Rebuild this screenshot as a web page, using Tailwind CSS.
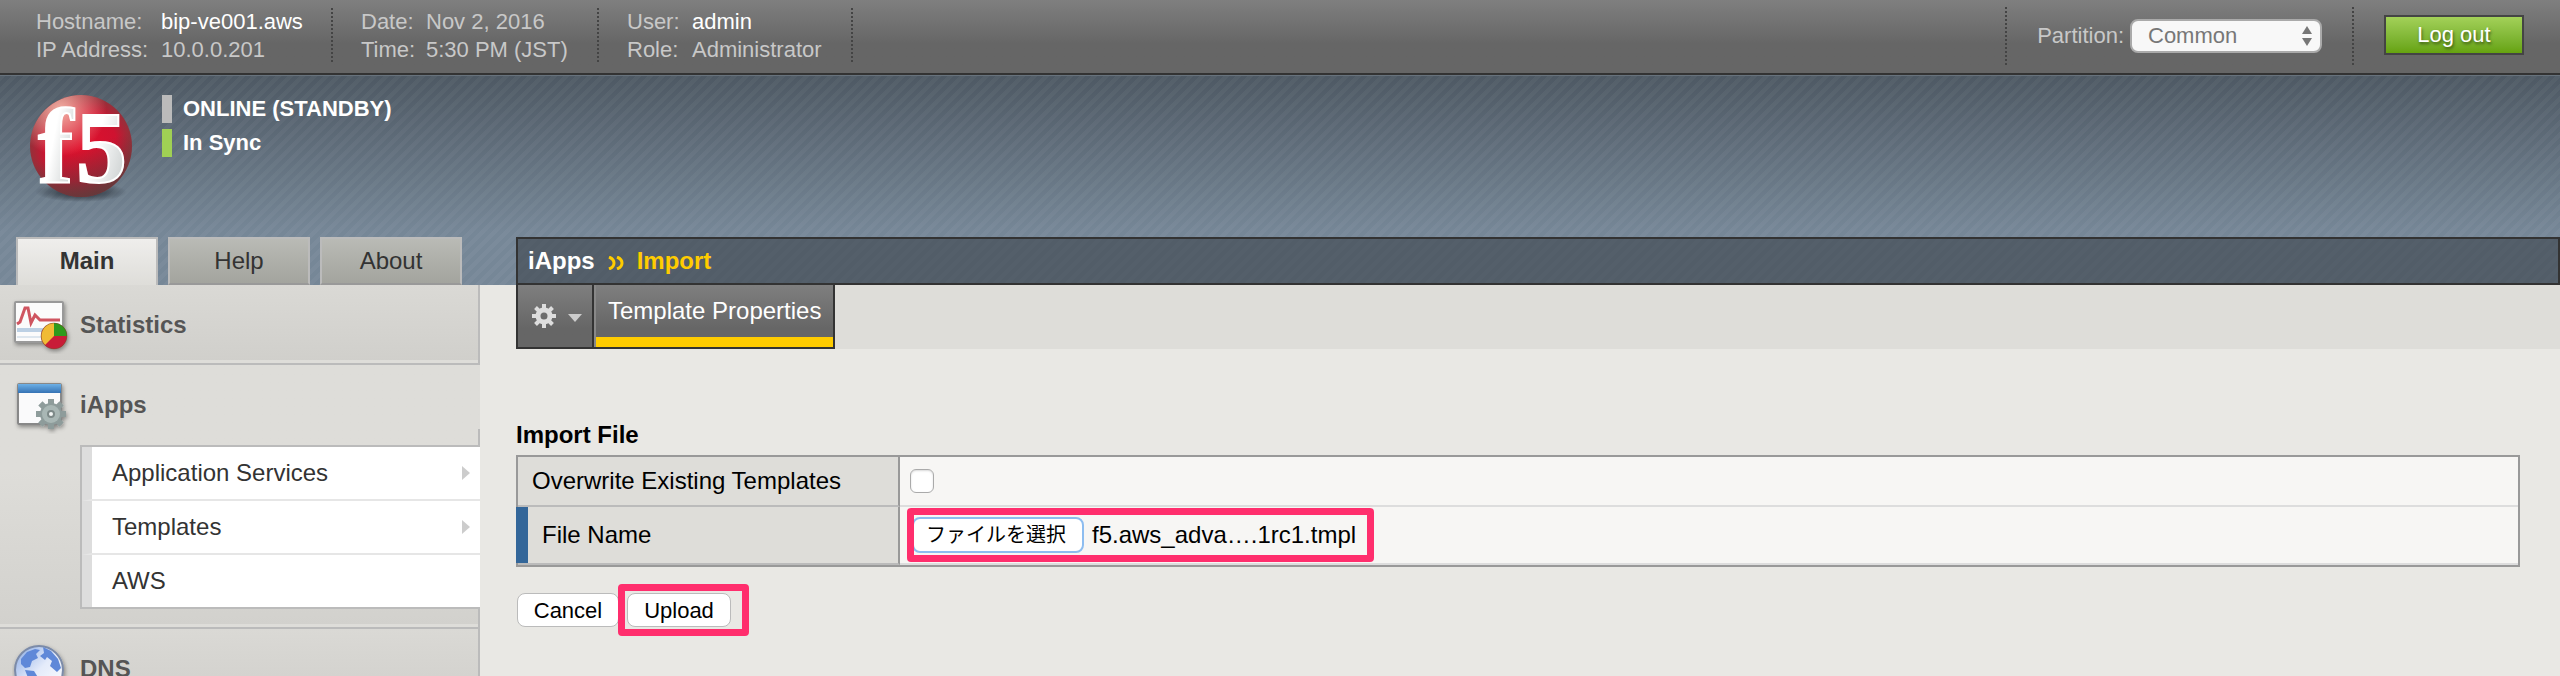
<!DOCTYPE html>
<html lang="en">
<head>
  <meta charset="UTF-8">
  <meta name="viewport" content="width=device-width, initial-scale=1.0">
  <title>BIG-IP - iApps - Import</title>
  <script src="https://cdn.jsdelivr.net/npm/@tailwindcss/browser@4"></script>
  <style>
    .stripes {
      background-image: linear-gradient(135deg, rgba(255, 255, 255, 0.035) 25%, transparent 25%, transparent 50%, rgba(255, 255, 255, 0.035) 50%, rgba(255, 255, 255, 0.035) 75%, transparent 75%);
      background-size: 12px 12px;
    }
    .dotted-right {
      background: repeating-linear-gradient(to bottom, #444 0 2px, transparent 2px 4px) right / 2px 100% no-repeat;
    }
  </style>
</head>
<body class="h-screen overflow-hidden flex flex-col bg-[#e9e8e4] text-2xl text-black font-['Liberation_Sans','Noto_Sans_CJK_JP',sans-serif]">
  <!-- Top bar -->
  <header class="flex justify-between h-[75px] shrink-0 border-b-2 border-[#333] bg-linear-to-b from-[#7f7f7f] to-[#666] to-60% text-[22px] leading-7 text-[#c8c8c8]">
    <div class="flex items-start pt-2">
      <dl class="dotted-right grid grid-cols-[125px_auto] h-14 pl-9 w-[333px]">
        <dt>Hostname:</dt><dd class="text-white">bip-ve001.aws</dd>
        <dt>IP Address:</dt><dd>10.0.0.201</dd>
      </dl>
      <dl class="dotted-right grid grid-cols-[65px_auto] h-14 pl-7 w-[266px]">
        <dt>Date:</dt><dd>Nov 2, 2016</dd>
        <dt>Time:</dt><dd>5:30 PM (JST)</dd>
      </dl>
      <dl class="dotted-right grid grid-cols-[65px_auto] h-14 pl-7 w-[254px]">
        <dt>User:</dt><dd class="text-white">admin</dd>
        <dt>Role:</dt><dd>Administrator</dd>
      </dl>
    </div>
    <div class="flex items-start pt-[7px] pr-9">
      <div class="dotted-right w-2 h-[58px]"></div>
      <div class="dotted-right flex items-start gap-[6px] h-[58px] pl-[30px] pr-8 pt-3">
        <label for="partition" class="leading-[34px]">Partition:</label>
        <div class="relative">
          <select id="partition" class="appearance-none block w-[192px] h-[34px] rounded-lg border-2 border-[#aaa] bg-[#f8f8f8] pl-4 leading-7 text-[#777]">
            <option>Common</option>
          </select>
          <svg class="absolute right-[10px] top-[7px] pointer-events-none" width="10" height="20" viewBox="0 0 10 20" fill="#777"><path d="M5 0l5 8H0zM5 20l5-8H0z"/></svg>
        </div>
      </div>
      <button class="ml-[30px] mt-2 w-[140px] h-10 border-2 border-[#444] bg-linear-to-b from-[#a3d158] to-[#66a30d] text-white text-shadow-[1px_2px_3px_rgb(0_0_0/0.5)]">Log out</button>
    </div>
  </header>

  <!-- Banner with status, tabs and breadcrumb -->
  <div class="shrink-0 border-t border-[#67727c] bg-linear-to-b from-[#4e5964] to-[#768797] to-75%">
    <div class="stripes">
      <div class="flex h-[161px] pl-6 pt-[19px]">
        <svg class="overflow-visible" width="116" height="112" viewBox="0 0 116 112">
          <defs>
            <radialGradient id="ball" cx="0.5" cy="0.5" r="0.5">
              <stop offset="0" stop-color="#e0102c"/>
              <stop offset="0.7" stop-color="#cf1230"/>
              <stop offset="1" stop-color="#95303a"/>
            </radialGradient>
            <radialGradient id="shine" cx="0.3" cy="0.15" r="0.45">
              <stop offset="0" stop-color="#f3b0a4"/>
              <stop offset="1" stop-color="#f3b0a4" stop-opacity="0"/>
            </radialGradient>
            <linearGradient id="shade" x1="0.4" y1="0.55" x2="0.55" y2="1">
              <stop offset="0" stop-color="#5a3a3a" stop-opacity="0"/>
              <stop offset="1" stop-color="#5a3a3a" stop-opacity="0.8"/>
            </linearGradient>
            <radialGradient id="drop">
              <stop offset="0" stop-color="#1c2229"/>
              <stop offset="1" stop-color="#1c2229" stop-opacity="0"/>
            </radialGradient>
            <linearGradient id="letters" x1="0" y1="0" x2="1" y2="0.6">
              <stop offset="0.5" stop-color="#fff"/>
              <stop offset="1" stop-color="#cfd3d3"/>
            </linearGradient>
          </defs>
          <ellipse cx="57" cy="97" rx="46" ry="10" fill="url(#drop)"/>
          <circle cx="57" cy="51" r="51" fill="url(#ball)"/>
          <circle cx="57" cy="51" r="51" fill="url(#shade)"/>
          <circle cx="57" cy="51" r="51" fill="url(#shine)"/>
          <g font-family="Liberation Serif, serif" font-weight="bold" fill="url(#letters)" stroke="#fff" stroke-width="2">
            <text x="14" y="87" font-size="106">f</text>
            <text x="52" y="87" font-size="102">5</text>
          </g>
        </svg>
        <div class="ml-[22px] flex flex-col gap-[6px] text-[22px] leading-7 font-bold text-white">
          <div class="border-l-[10px] border-[#bbb] pl-[11px]">ONLINE (STANDBY)</div>
          <div class="border-l-[10px] border-[#a0d054] pl-[11px]">In Sync</div>
        </div>
      </div>
      <div class="flex">
        <nav class="flex gap-[10px] w-[516px] shrink-0 pl-4 text-center leading-[44px] text-[#333]">
          <a href="#" class="w-[142px] h-12 border-2 border-b-0 border-[#bbb] bg-linear-to-b from-[#efeeec] to-[#deddd9] font-bold">Main</a>
          <a href="#" class="w-[142px] h-12 border-2 border-[#bbb] border-b-[#999] bg-linear-to-b from-[#b9bab5] to-[#a3a49e]">Help</a>
          <a href="#" class="w-[142px] h-12 border-2 border-[#bbb] border-b-[#999] bg-linear-to-b from-[#b9bab5] to-[#a3a49e]">About</a>
        </nav>
        <div class="flex-1 flex items-center gap-3 h-12 border-2 border-[#333] bg-[#2e3339]/50 pl-[10px] font-bold text-white leading-[44px]">
          <span>iApps</span>
          <svg width="18" height="14" viewBox="0 0 18 14" class="mt-1" fill="none" stroke="#fc0" stroke-width="3"><path d="M2 1q5 2 5 6t-5 6M10 1q5 2 5 6t-5 6"/></svg>
          <span class="text-[#fc0]">Import</span>
        </div>
      </div>
    </div>
  </div>

  <div class="flex flex-1 min-h-0">
    <!-- Sidebar -->
    <aside class="w-[480px] shrink-0 overflow-hidden font-bold text-[#555]">
      <a href="#" class="flex h-20 pl-3 pt-[13px] border-b-2 border-r-2 border-[#bbb] bg-linear-to-b from-[#dad9d5] to-[#d0cfcb] shadow-[inset_0_-3px_#deddd9]">
        <svg width="68" height="56" viewBox="0 0 68 56">
          <defs>
            <filter id="soft" x="-20%" y="-20%" width="150%" height="150%"><feDropShadow dx="1" dy="2" stdDeviation="2" flood-opacity="0.4"/></filter>
          </defs>
          <g filter="url(#soft)">
            <rect x="3" y="4" width="48" height="40" rx="1" fill="#fbfbfb" stroke="#999" stroke-width="2"/>
            <path d="M5 30h44v4H5z" fill="#bcd0e4"/>
            <path d="M5 38h44v2H5z" fill="#dde6ee"/>
            <path d="M5 26l3-2 5-14h3l3 15 4-8 5 5h20" fill="none" stroke="#cf5560" stroke-width="3"/>
            <circle cx="42" cy="38" r="13" fill="#c81e38"/>
            <path d="M42 38V25a13 13 0 0 1 13 13z" fill="#2f9a1d"/>
            <path d="M42 38V25a13 13 0 0 0-9 22z" fill="#f0bb35"/>
            <circle cx="42" cy="38" r="13" fill="none" stroke="#5a4a20" stroke-opacity="0.4"/>
          </g>
        </svg>
        <span class="leading-[54px]">Statistics</span>
      </a>

      <div class="h-[264px] border-b-2 border-[#bbb] bg-linear-to-b from-[#deddd9] from-40% to-[#d2d1cd] shadow-[inset_0_-3px_#deddd9]">
        <a href="#" class="flex h-16 pl-3 pt-[13px]">
          <svg width="68" height="56" viewBox="0 0 68 56">
            <defs>
              <linearGradient id="bar" x1="0" y1="0" x2="0" y2="1"><stop offset="0" stop-color="#6db0e6"/><stop offset="1" stop-color="#3572b4"/></linearGradient>
            </defs>
            <g filter="url(#soft)">
              <rect x="6" y="6" width="43" height="40" rx="1" fill="#fafafb" stroke="#888" stroke-width="2"/>
              <path d="M6 6h43v9H6z" fill="url(#bar)"/>
              <g transform="translate(39 36)">
                <g fill="#8e9c9b">
                  <path id="teeth" d="M-3-15h6v30h-6zM-15-3h30v6h-30z"/>
                  <use href="#teeth" transform="rotate(45)"/>
                </g>
                <circle r="11" fill="#8e9c9b"/>
                <circle r="9" fill="#a9b7b5"/>
                <circle r="3" fill="#f4f6f6" stroke="#7d8988" stroke-width="2"/>
              </g>
            </g>
          </svg>
          <span class="leading-[54px]">iApps</span>
        </a>
        <div class="h-4 border-r-2 border-[#bbb]"></div>
        <ul class="ml-20 border-2 border-r-0 border-[#bbb] font-normal text-[#333]">
          <li class="border-l-[10px] border-l-[#ddd] border-b-2 border-b-[#e6e6e6]">
            <a href="#" class="flex items-center justify-between h-[52px] bg-white pl-5 pr-[10px]">Application Services
              <svg width="8" height="14" viewBox="0 0 8 14" fill="#ccc"><path d="M0 0l8 7-8 7z"/></svg>
            </a>
          </li>
          <li class="border-l-[10px] border-l-[#ddd] border-b-2 border-b-[#e6e6e6]">
            <a href="#" class="flex items-center justify-between h-[52px] bg-white pl-5 pr-[10px]">Templates
              <svg width="8" height="14" viewBox="0 0 8 14" fill="#ccc"><path d="M0 0l8 7-8 7z"/></svg>
            </a>
          </li>
          <li class="border-l-[10px] border-l-[#ddd]">
            <a href="#" class="flex items-center h-[52px] bg-white pl-5">AWS</a>
          </li>
        </ul>
        <div class="h-[18px] border-r-2 border-[#bbb]"></div>
      </div>

      <a href="#" class="flex h-20 pl-3 pt-[13px] border-b-2 border-r-2 border-[#bbb] bg-linear-to-b from-[#dad9d5] to-[#d0cfcb]">
        <svg width="68" height="56" viewBox="0 0 68 56">
          <defs>
            <linearGradient id="sea" x1="0" y1="0" x2="1" y2="1"><stop offset="0" stop-color="#86a8e4"/><stop offset="0.5" stop-color="#e4ebfa"/><stop offset="1" stop-color="#fff"/></linearGradient>
          </defs>
          <g filter="url(#soft)">
            <circle cx="27" cy="28" r="24" fill="url(#sea)" stroke="#7c8ba8" stroke-width="2"/>
            <path d="M9 17l6-7 8-3 5 1-4 4 2 4-6 3-2 6-5 1-4-4z" fill="#5f88d8"/>
            <path d="M31 5l8 4 7 8 3 9-4 4-7-6 2-5-5-4-2 3-5-4 4-3z" fill="#5f88d8"/>
            <path d="M13 28l9 1 5 8-3 10-6-6z" fill="#5f88d8"/>
          </g>
        </svg>
        <span class="leading-[54px]">DNS</span>
      </a>
    </aside>

    <!-- Main content -->
    <main class="flex-1 pl-9">
      <div class="flex h-16 bg-[#deddd9]">
        <button aria-label="Options" class="flex items-center gap-3 w-[78px] border-2 border-t-0 border-[#333] bg-linear-to-b from-[#7f7f7f] to-[#666] to-70% pl-[14px]">
          <svg width="24" height="24" viewBox="-12 -12 24 24" fill="#ddd">
            <path id="cog" d="M-2-12h4v6h-4zM-2 6h4v6h-4zM-12-2h6v4h-6zM6-2h6v4H6z"/>
            <use href="#cog" transform="rotate(45)"/>
            <circle r="6" fill="none" stroke="#ddd" stroke-width="5"/>
          </svg>
          <svg width="14" height="8" viewBox="0 0 14 8" class="mt-1" fill="#ccc"><path d="M0 0h14L7 8z"/></svg>
        </button>
        <div class="flex border-b-2 border-r-2 border-[#333] bg-linear-to-b from-[#7f7f7f] to-[#666] to-70%">
          <div class="w-[2px] bg-[#888]"></div>
          <a href="#" class="block border-b-[10px] border-[#fc0] px-3 leading-[52px] text-white">Template Properties</a>
        </div>
      </div>

      <form class="pt-[68px] pr-10">
        <h2 class="pb-[2px] font-bold leading-9">Import File</h2>
        <table class="w-full border-separate border-spacing-0 border-2 border-[#999] text-left">
          <tr>
            <th class="w-[382px] h-[50px] border-b-2 border-b-[#bbb] border-r-2 border-r-[#999] bg-[#deddd9] pl-[14px] font-normal"><label for="overwrite">Overwrite Existing Templates</label></th>
            <td class="border-b-2 border-[#ddd] bg-[#f7f6f4] pl-[10px]">
              <input type="checkbox" id="overwrite" class="appearance-none block size-6 rounded-md border border-[#aaa] bg-white shadow-[inset_0_1px_2px_rgb(0_0_0/0.15)]">
            </td>
          </tr>
          <tr>
            <th class="h-[58px] border-b-2 border-b-[#bbb] border-r-2 border-r-[#999] bg-[#deddd9] p-0 font-normal">
              <label for="file" class="-ml-[2px] flex items-center h-14 border-l-12 border-[#369] pl-[14px]">File Name</label>
            </th>
            <td class="border-b-2 border-[#ddd] bg-[#f7f6f4] pl-3">
              <div class="relative flex items-center gap-2 w-fit">
                <input type="file" id="file" class="sr-only">
                <label for="file" class="h-9 w-[172px] rounded-lg border-2 border-[#8dbdf0] bg-white pl-3 text-xl leading-8">ファイルを選択</label>
                <span>f5.aws_adva….1rc1.tmpl</span>
                <div class="absolute -left-[5px] -inset-y-[9px] -right-[18px] rounded-sm border-[7px] border-[#ff2e6d] pointer-events-none"></div>
              </div>
            </td>
          </tr>
        </table>

        <div class="flex gap-2 pt-[26px] pl-px text-[22px]">
          <button type="button" class="h-[34px] w-[102px] rounded-lg border border-[#bbb] bg-white pt-px leading-8">Cancel</button>
          <div class="relative">
            <button type="submit" class="block h-[34px] w-[104px] rounded-lg border border-[#bbb] bg-white pt-px leading-8">Upload</button>
            <div class="absolute -inset-[9px] -right-[18px] rounded-sm border-[7px] border-[#ff2e6d] pointer-events-none"></div>
          </div>
        </div>
      </form>
    </main>
  </div>
</body>
</html>
